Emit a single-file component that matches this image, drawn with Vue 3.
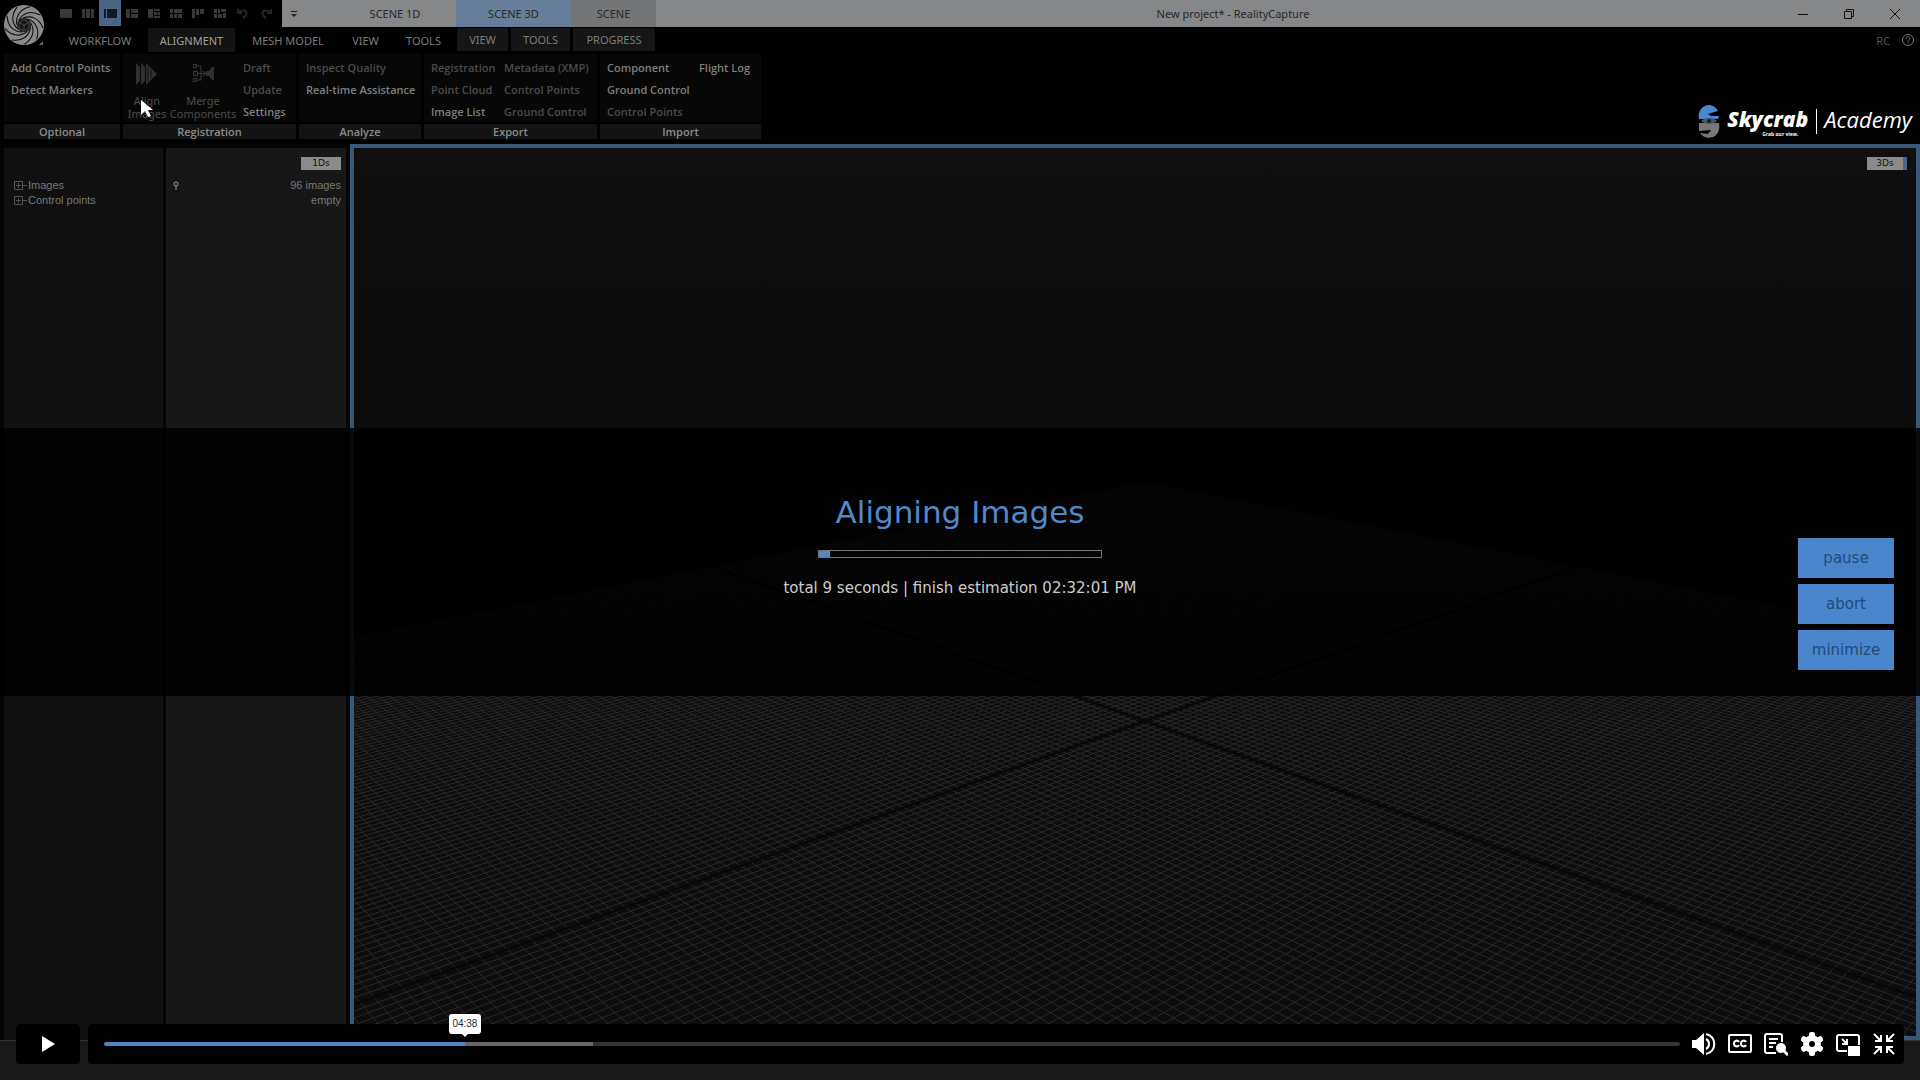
<script setup>
import { ref, computed } from "vue";

const sceneTabs = [
  { text: 'SCENE 1D', type: 'plain' },
  { text: 'SCENE 3D', type: 'blue' },
  { text: 'SCENE', type: 'grey' }
]

const tabs = [
  { text: 'WORKFLOW' },
  { text: 'ALIGNMENT', type: 'active' },
  { text: 'MESH MODEL' },
  { text: 'VIEW' },
  { text: 'TOOLS' },
  { text: 'VIEW', type: 'context' },
  { text: 'TOOLS', type: 'context' },
  { text: 'PROGRESS', type: 'context' }
]

// layout presets in the quick access bar
const layouts = [
  { name: 'Single', d: 'M0 0h12v9H0z' },
  { name: 'Two columns', d: 'M0 0h3v9H0zM4 0h4v9H4zM9 0h3v9H9z' },
  { name: '1D 3D', d: 'M0 0h2v9H0zM3 0h10v9H3z', on: true },
  { name: '1+2 rows', d: 'M0 0h4v9H0zM5 0h7v4H5zM5 5h7v4H5z' },
  { name: '1+3', d: 'M0 0h5v9H0zM6 0h6v2H6zM6 3h3v3H6zM10 3h2v3h-2zM6 7h6v2H6z' },
  { name: '2+2', d: 'M0 0h3v4H0zM4 0h8v4H4zM0 5h3v4H0zM4 5h3v4H4zM8 5h4v4H8z' },
  { name: 'Flag', d: 'M0 0h3v9H0zM4 0h3v6H4zM8 0h4v5H8z' },
  { name: 'Six', d: 'M0 0h3v4H0zM4 0h2v4H4zM7 0h5v3H7zM0 5h3v4H0zM4 5h4v4H4zM9 4h3v5H9z' }
]

const groups = [
  {
    title: 'Optional',
    cols: [[{ text: 'Add Control Points', on: true }, { text: 'Detect Markers', on: true }]]
  },
  {
    title: 'Registration',
    big: true,
    cols: [[{ text: 'Draft' }, { text: 'Update' }, { text: 'Settings', on: true }]]
  },
  {
    title: 'Analyze',
    cols: [[{ text: 'Inspect Quality' }, { text: 'Real-time Assistance', on: true }]]
  },
  {
    title: 'Export',
    cols: [
      [{ text: 'Registration' }, { text: 'Point Cloud' }, { text: 'Image List', on: true }],
      [{ text: 'Metadata (XMP)' }, { text: 'Control Points' }, { text: 'Ground Control' }]
    ]
  },
  {
    title: 'Import',
    cols: [
      [{ text: 'Component', on: true }, { text: 'Ground Control', on: true }, { text: 'Control Points' }],
      [{ text: 'Flight Log', on: true }]
    ]
  }
]

// ground grid, two point perspective
const cx = 791
const horizon = 45
const vpx = 1475
const depth = t => horizon + 638.5 / (1.209 + t)
function gridPath(list) {
  let d = ''
  for (const t of list) {
    const y = depth(t)
    const s = (y - horizon) / vpx
    const far = 1700
    const x = cx + vpx
    d += `M${x} ${horizon}L${x - 2 * far} ${(horizon + s * 2 * far).toFixed(2)}`
    d += `M${cx - vpx} ${horizon}L${cx - vpx + 2 * far} ${(horizon + s * 2 * far).toFixed(2)}`
  }
  return d
}
const steps = []
for (let i = -100; i <= 100; i++) {
  if (i !== 0) steps.push(i / 100)
}
const thin = gridPath(steps)
const axis = gridPath([0])

const played = ref(229)
const seekStyle = computed(() => ({ '--played': played.value / 10 + '%' }))
const actions = ['pause', 'abort', 'minimize']
const blades = [0, 40, 80, 120, 160, 200, 240, 280, 320]
const teeth = [0, 60, 120, 180, 240, 300]
</script>

<template>
  <div class="app">
    <header class="top">
      <button class="logo" aria-label="Application menu">
        <svg width="48" height="50" viewBox="0 0 48 50">
          <circle cx="24" cy="25" r="20" fill="#8a8a8a" />
          <g fill="none" stroke="#111" stroke-width="1.1">
            <path v-for="b in blades" :key="b" d="M23 18C31 15 39 18 43 28" :transform="`rotate(${b} 24 25)`" />
          </g>
          <circle cx="24" cy="25" r="7" fill="#151515" />
          <path d="M24 19.500l5 3v5.500l-5 3-5-3v-5.500zM19 22.500l5 2.500 5-2.500M24 25v6" fill="none" stroke="#4a4a4a" />
          <path d="M43 41v4h-4z" fill="#666" />
        </svg>
      </button>

      <!--  title bar  -->
      <div class="titlebar">
        <div class="quick">
          <button v-for="l in layouts" :key="l.name" :aria-label="l.name" :class="['quick-btn', { on: l.on }]">
            <svg width="13" height="9" viewBox="0 0 13 9"><path :d="l.d" /></svg>
          </button>
          <button class="quick-btn undo" aria-label="Undo">
            <svg width="12" height="11" viewBox="0 0 12 11"><path d="M1 1v4h4M1.500 5C5 1 10 2 9.500 6c0 2-2 3-3.500 4" /></svg>
          </button>
          <button class="quick-btn undo" aria-label="Redo">
            <svg width="12" height="11" viewBox="0 0 12 11"><path d="M11 1v4H7M10.500 5C7 1 2 2 2.500 6c0 2 2 3 3.500 4" /></svg>
          </button>
        </div>
        <div class="caption">
          <button class="custom" aria-label="Customize">
            <svg width="6" height="6" viewBox="0 0 6 6"><path d="M0 0h6v1H0zM0 3h6L3 6z" fill="#222" /></svg>
          </button>
          <div class="scene-tabs">
            <button v-for="s in sceneTabs" :key="s.text" :class="['scene', s.type]">{{ s.text }}</button>
          </div>
          <div class="window-title">New project* - RealityCapture</div>
          <div class="window-btns">
            <button aria-label="Minimize window">
              <svg width="12" height="12" viewBox="0 0 12 12"><path d="M1 6.500h10" /></svg>
            </button>
            <button aria-label="Restore window">
              <svg width="12" height="12" viewBox="0 0 12 12"><path d="M1.500 3.500h7v7h-7zM3.500 3V1.500h7v7H9" /></svg>
            </button>
            <button aria-label="Close window">
              <svg width="12" height="12" viewBox="0 0 12 12"><path d="M1 1l10 10M11 1L1 11" /></svg>
            </button>
          </div>
        </div>
      </div>

      <!--  ribbon tabs  -->
      <nav class="tabs">
        <button v-for="(t, i) in tabs" :key="i" :class="['tab', t.type]">{{ t.text }}</button>
        <div class="user">
          <span>RC</span>
          <button aria-label="Help">
            <svg width="12" height="12" viewBox="0 0 12 12" fill="none" stroke="#777">
              <circle cx="6" cy="6" r="5.500" />
              <path d="M4 5c0-3 4-3 4-.5C8 6 6 6 6 7.500M6 8.500v1" />
            </svg>
          </button>
        </div>
      </nav>

      <!--  ribbon  -->
      <div class="ribbon">
        <section v-for="g in groups" :key="g.title" :class="['group', g.title.toLowerCase()]">
          <div class="group-body">
            <template v-if="g.big">
              <button class="big">
                <svg width="24" height="24" viewBox="0 0 24 24" fill="#303030">
                  <path d="M1 1l4 4v14l-4 4zM6 1l4 4v14l-4 4zM11 1l11 11-11 11z" />
                  <path d="M13 5v14M16 8v8" stroke="#151515" />
                </svg>
                <span>Align<br>Images</span>
                <svg class="cursor" width="13" height="20" viewBox="0 0 13 20">
                  <path d="M1 1v15l4-4 3 6 3-1-3-6h5z" fill="#fff" />
                </svg>
              </button>
              <button class="big merge">
                <svg width="24" height="24" viewBox="0 0 24 24" fill="none" stroke="#3a3a3a">
                  <path d="M2.500 9.500h4v4h-4zM2.500 2.500h3v3h-3zM6 4h4v14H6M2.500 16.500h3v3h-3zM7 11.500h7M12 9l3 2.500-3 2.500" />
                  <path d="M15 9h3l3-4h2v13h-2l-3-4h-3z" fill="#303030" stroke="none" />
                </svg>
                <span>Merge<br>Components</span>
              </button>
            </template>
            <div v-for="(c, i) in g.cols" :key="i" class="cmd-col">
              <button v-for="b in c" :key="b.text" :class="['cmd', { on: b.on }]">{{ b.text }}</button>
            </div>
          </div>
          <h2 class="group-title">{{ g.title }}</h2>
        </section>
        <div class="brand">
          <svg width="22" height="34" viewBox="0 0 22 34">
            <path d="M20 7C17 1 10-1 5 3 1 6 0 11 1 15h19l1-3h-8l-3-2z" fill="#4a87cf" />
            <path d="M1 19h20c1 5 0 10-4 13-5 3-12 2-15-3l8 1 3-4-12 1z" fill="#777" />
            <path d="M3 17c4-4 12-4 16 0-4 4-12 4-16 0z" fill="#4b535c" />
            <circle cx="11" cy="17" r="2" fill="#16202c" />
          </svg>
          <div class="brand-name">
            <b>Skycrab</b>
            <small>Grab our view.</small>
          </div>
          <i class="brand-sub">Academy</i>
        </div>
      </div>
    </header>

    <main class="work">
      <aside class="tree">
        <ul>
          <li v-for="n in ['Images', 'Control points']" :key="n">
            <button>
              <svg width="14" height="9" viewBox="0 0 14 9" fill="none" stroke="#555">
                <path d="M.5.5h8v8h-8zM2 4.500h5M4.500 2v5M9 4.500h4" />
              </svg>
              {{ n }}
            </button>
          </li>
        </ul>
      </aside>
      <aside class="info">
        <button class="badge">1Ds</button>
        <div class="info-row">
          <svg width="6" height="9" viewBox="0 0 6 9" fill="none" stroke="#999">
            <circle cx="3" cy="3" r="2" />
            <path d="M3 5v4" />
          </svg>
          <span>96 images</span>
        </div>
        <div class="info-row"><span>empty</span></div>
      </aside>
      <section class="view3d">
        <svg class="ground" viewBox="0 0 1562 888" preserveAspectRatio="none">
          <defs>
            <clipPath id="plane">
              <path d="M791 334L2266 623V3000H-684V623z" />
            </clipPath>
          </defs>
          <g clip-path="url(#plane)" fill="none">
            <path :d="thin" stroke="#282828" />
            <path :d="axis" stroke="#070707" stroke-width="2" />
          </g>
        </svg>
        <button class="badge badge-3d">3Ds</button>
      </section>

      <!--  progress band  -->
      <div class="band">
        <div class="status">
          <h1>Aligning Images</h1>
          <progress value="4" max="100" aria-label="Aligning Images"></progress>
          <p>total 9 seconds | finish estimation 02:32:01 PM</p>
        </div>
        <div class="actions">
          <button v-for="a in actions" :key="a">{{ a }}</button>
        </div>
      </div>
    </main>

    <!--  video player  -->
    <div class="player">
      <button class="play" aria-label="Play">
        <svg width="14" height="16" viewBox="0 0 14 16"><path d="M1 0l13 8-13 8z" fill="#fff" /></svg>
      </button>
      <div class="controls">
        <div class="seek" :style="seekStyle">
          <input v-model="played" type="range" min="0" max="1000" aria-label="Seek">
          <div class="tip">04:38</div>
        </div>
        <div class="icons">
          <button aria-label="Volume">
            <svg width="24" height="24" viewBox="0 0 24 24">
              <path d="M0 8h4l8-7v22l-8-7H0z" fill="#fff" />
              <path d="M14 7c4 2 4 8 0 10M14 2c11 3 11 17 0 20" fill="none" stroke="#fff" stroke-width="2" />
            </svg>
          </button>
          <button aria-label="Captions">
            <svg width="24" height="24" viewBox="0 0 24 24" fill="none" stroke="#fff" stroke-width="2">
              <rect x="1" y="3" width="22" height="17" rx="1" />
              <path d="M11 10c-1-2-5-2-5 1.500s4 3.500 5 1.500M18 10c-1-2-5-2-5 1.500s4 3.500 5 1.500" />
            </svg>
          </button>
          <button aria-label="Transcript">
            <svg width="24" height="24" viewBox="0 0 24 24" fill="none" stroke="#fff" stroke-width="2">
              <path d="M12 21H3q-2 0-2-2V4q0-2 2-2h13q2 0 2 2v6M5 7h9M5 11h7M5 15h4" />
              <circle cx="17" cy="16" r="4" fill="#fff" />
              <path d="M19 18l5 5" stroke-width="3" />
            </svg>
          </button>
          <button aria-label="Settings">
            <svg width="24" height="24" viewBox="0 0 24 24">
              <circle cx="12" cy="12" r="6" fill="none" stroke="#fff" stroke-width="6" />
              <rect v-for="r in teeth" :key="r" x="9" y="0" width="6" height="7" rx="2" fill="#fff" :transform="`rotate(${r} 12 12)`" />
            </svg>
          </button>
          <button aria-label="Picture in picture">
            <svg width="24" height="24" viewBox="0 0 24 24" fill="none" stroke="#fff" stroke-width="2">
              <path d="M11 19H3q-2 0-2-2V5q0-2 2-2h18q2 0 2 2v8M6 7l5 5M11 7v5H6" />
              <path d="M13 15h10v8H13z" fill="#fff" />
            </svg>
          </button>
          <button aria-label="Exit full screen">
            <svg width="24" height="24" viewBox="0 0 24 24" fill="none" stroke="#fff" stroke-width="2">
              <path d="M2 2l7 7M9 3v6H3M22 2l-7 7M15 3v6h6M2 22l7-7M9 21v-6H3M22 22l-7-7M15 21v-6h6" />
            </svg>
          </button>
        </div>
      </div>
    </div>
  </div>
</template>

<style>
body {
  margin: 0;
  background: #1a1a1a;
}
</style>

<style scoped>
.app {
  position: relative;
  display: flex;
  flex-direction: column;
  box-sizing: border-box;
  min-height: 100vh;
  padding-bottom: 39px;
  background: #1a1a1a;
  color: #777;
  font-family: "Noto Sans", "Open Sans", sans-serif;
  font-size: 11px;
}
button {
  padding: 0;
  border: none;
  background: none;
  color: inherit;
  font: inherit;
  cursor: pointer;
}
svg {
  display: block;
}
.top {
  position: relative;
  height: 144px;
  background: #000;
}
.logo {
  position: absolute;
  top: 0;
  left: 0;
}

.titlebar {
  display: flex;
  height: 27px;
}
.quick {
  display: flex;
  box-sizing: border-box;
  width: 282px;
  padding-left: 55px;
}
.quick-btn {
  display: flex;
  align-items: center;
  justify-content: center;
  width: 22px;
  height: 26px;
  fill: #383838;
}
.quick-btn.on {
  background: #4a6485;
  fill: #15181c;
}
.undo {
  width: 23px;
}
.undo path {
  fill: none;
  stroke: #262626;
  stroke-width: 2;
}
.caption {
  display: flex;
  flex: 1;
  background: #858789;
  color: #26282a;
}
.custom {
  display: flex;
  align-items: center;
  justify-content: center;
  width: 24px;
}
.scene-tabs {
  display: flex;
  padding-left: 28px;
}
.scene {
  width: 122px;
}
.scene.blue {
  width: 115px;
  background: #687f9b;
}
.scene.grey {
  width: 85px;
  background: #747577;
}
.window-title {
  flex: 1;
  padding-left: 30px;
  line-height: 27px;
  text-align: center;
}
.window-btns {
  display: flex;
  padding-right: 2px;
}
.window-btns button {
  display: flex;
  align-items: center;
  justify-content: center;
  width: 46px;
}
.window-btns path {
  fill: none;
  stroke: #111;
}

.tabs {
  display: grid;
  grid-template-columns: 96px 87px 106px 49px 67px 51px 62px 85px 1fr;
  box-sizing: border-box;
  height: 27px;
  padding: 1px 0 0 52px;
}
.tab {
  height: 24px;
  color: #7c7c7c;
}
.tab.active {
  background: #131313;
  color: #a0a0a0;
}
.tab.context {
  height: 23px;
  background: #161616;
}
.tab:nth-child(7),
.tab:nth-child(8) {
  margin-left: 3px;
}
.user {
  display: flex;
  align-items: center;
  justify-content: flex-end;
  gap: 12px;
  height: 24px;
  padding-right: 6px;
  color: #555;
}

.ribbon {
  display: flex;
  gap: 3px;
  padding-left: 4px;
}
.group {
  width: 173px;
}
.group.optional {
  width: 116px;
}
.group.analyze {
  width: 122px;
}
.group.import {
  width: 161px;
}
.group-body {
  display: flex;
  gap: 12px;
  box-sizing: border-box;
  height: 68px;
  padding: 2px 0 0 7px;
  background: #070707;
}
.group.export .group-body {
  gap: 8px;
}
.import .cmd-col:first-child {
  width: 80px;
}
.export .cmd-col:first-child {
  width: 65px;
}
.registration .group-body {
  gap: 0;
  padding-left: 4px;
}
.cmd-col {
  display: flex;
  flex-direction: column;
}
.cmd {
  height: 22px;
  color: #4b4b4b;
  font-family: "Open Sans", "Noto Sans", sans-serif;
  font-weight: 600;
  text-align: left;
  white-space: nowrap;
}
.cmd.on {
  color: #7e7e7e;
}
.big {
  position: relative;
  display: flex;
  flex-direction: column;
  align-items: center;
  gap: 8px;
  width: 40px;
  padding-top: 6px;
  color: #4b4b4b;
  line-height: 13px;
}
.big.merge {
  width: 72px;
  margin-right: 4px;
}
.cursor {
  position: absolute;
  top: 43px;
  left: 13px;
}
.group-title {
  height: 15px;
  margin: 2px 0 0;
  background: #131313;
  color: #8c8c8c;
  font-family: "Open Sans", "Noto Sans", sans-serif;
  font-size: 11px;
  font-weight: 600;
  line-height: 15px;
  text-align: center;
}
.brand {
  display: flex;
  align-items: flex-start;
  gap: 7px;
  margin-left: auto;
  padding: 50px 8px 0 0;
  color: #fff;
  font-family: "Open Sans", sans-serif;
}
.brand-name {
  display: flex;
  flex-direction: column;
  height: 25px;
  margin-top: 5px;
  padding-right: 8px;
  border-right: 1px solid #fff;
}
.brand-name b {
  font-size: 21px;
  font-style: italic;
  font-weight: 800;
  line-height: 20px;
}
.brand-name small {
  padding-left: 35px;
  font-size: 5px;
  font-weight: 700;
  line-height: 10px;
}
.brand-sub {
  font-size: 22px;
  line-height: 30px;
}

.work {
  position: relative;
  display: flex;
  flex: 1;
  background: #040404;
  border-bottom: 1px solid #333;
}
.tree,
.info {
  margin-top: 4px;
  color: #777;
  font-family: "Liberation Sans", sans-serif;
  font-size: 11px;
  line-height: 15px;
}
.tree {
  width: 159px;
  margin-left: 4px;
  background: #101010;
}
.tree ul {
  margin: 30px 0 0;
  padding: 0 0 0 10px;
  list-style: none;
}
.tree li button {
  display: flex;
  align-items: center;
}
.info {
  display: flex;
  flex-direction: column;
  box-sizing: border-box;
  width: 180px;
  margin-left: 3px;
  padding: 9px 5px 0 7px;
  background: #171717;
}
.badge {
  align-self: flex-end;
  width: 40px;
  height: 13px;
  background: #8b8b8b;
  color: #111;
  font-family: "DejaVu Sans", sans-serif;
  font-size: 9px;
  line-height: 13px;
}
.info-row {
  display: flex;
  align-items: center;
}
.info-row span {
  margin-left: auto;
}
.badge + .info-row {
  margin-top: 8px;
}
.view3d {
  position: relative;
  flex: 1;
  margin-left: 4px;
  border: 4px solid #375878;
  background: linear-gradient(#0f0f0f, #0c0c0c 20%);
}
.ground {
  position: absolute;
  width: 100%;
  height: 100%;
}
.badge-3d {
  position: absolute;
  top: 9px;
  right: 9px;
  border-right: 4px solid #47678c;
}

.band {
  position: absolute;
  top: 284px;
  right: 0;
  left: 0;
  display: grid;
  grid-template-columns: 1fr auto 1fr;
  box-sizing: border-box;
  height: 268px;
  background: rgba(0, 0, 0, 0.87);
}
.status {
  grid-column: 2;
  display: flex;
  flex-direction: column;
  align-items: center;
  padding-top: 64px;
  font-family: "DejaVu Sans", sans-serif;
}
.status h1 {
  margin: 0;
  color: #5088ca;
  font-size: 31px;
  font-weight: 400;
  line-height: 40px;
}
.status progress {
  box-sizing: border-box;
  width: 284px;
  height: 8px;
  margin-top: 18px;
  border: 1px solid #777;
  background: none;
  appearance: none;
}
.status progress::-webkit-progress-bar {
  background: none;
}
.status progress::-webkit-progress-value {
  background: #5088ca;
}
.status p {
  margin: 18px 0 0;
  color: #ccc;
  font-size: 15px;
  line-height: 24px;
}
.actions {
  display: flex;
  flex-direction: column;
  gap: 6px;
  justify-self: end;
  padding: 110px 26px 0 0;
}
.actions button {
  width: 96px;
  height: 40px;
  background: #4a86cc;
  color: #234a7a;
  font-family: "DejaVu Sans", sans-serif;
  font-size: 15px;
}

.player {
  position: absolute;
  right: 16px;
  bottom: 16px;
  left: 16px;
  display: flex;
  gap: 8px;
  height: 40px;
}
.play {
  display: flex;
  align-items: center;
  justify-content: center;
  width: 64px;
  border-radius: 4px;
  background: #000;
}
.controls {
  display: flex;
  flex: 1;
  align-items: center;
  padding: 0 8px 0 16px;
  border-radius: 4px;
  background: #000;
}
.seek {
  position: relative;
  display: flex;
  flex: 1;
}
.seek input {
  width: 100%;
  height: 4px;
  margin: 0;
  border-radius: 2px;
  background: linear-gradient(to right, #5283c0 var(--played), #666 var(--played), #666 31%, #333 31%);
  appearance: none;
}
.seek input::-webkit-slider-thumb {
  width: 1px;
  height: 4px;
  appearance: none;
}
.tip {
  position: absolute;
  bottom: 12px;
  left: var(--played);
  width: 32px;
  border-radius: 3px;
  background: #fff;
  color: #1a2e3b;
  font-family: "Liberation Sans", sans-serif;
  font-size: 10px;
  line-height: 20px;
  text-align: center;
  transform: translateX(-50%);
}
.tip::after {
  content: "";
  position: absolute;
  top: 20px;
  left: 13px;
  border: 3px solid transparent;
  border-top-color: #fff;
}
.icons {
  display: flex;
  gap: 12px;
  padding-left: 12px;
}
</style>
